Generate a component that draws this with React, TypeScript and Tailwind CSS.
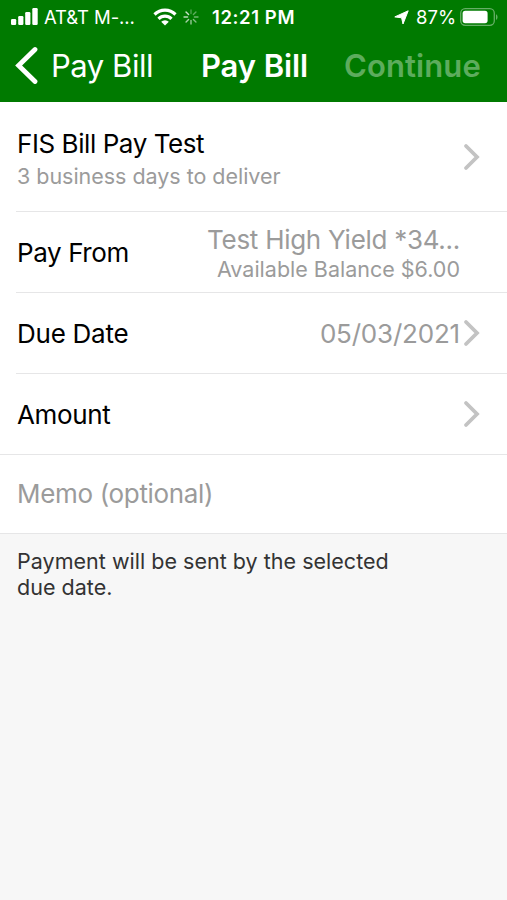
import type { ReactNode } from 'react'
import clsx from 'clsx'

const SPOKES = [0, 45, 90, 135, 180, 225, 270, 315]

function Chevron() {
    return (
        <svg className="h-[28px] w-[18px] shrink-0" viewBox="0 0 18 28" fill="none">
            <path d="M3 3 14 14 3 25" stroke="#c3c3c3" strokeWidth="3.8" strokeLinecap="round" />
        </svg>
    )
}

function StatusBar() {
    return (
        <div className="flex h-[34px] items-center text-[18.5px] leading-none">
            <svg className="ml-[11px] h-[18px] w-[27px] shrink-0" viewBox="0 0 27 18" fill="#fff">
                <rect x="0" y="11" width="5.2" height="6" rx="1.2" />
                <rect x="7.2" y="8" width="5.2" height="9" rx="1.2" />
                <rect x="14.2" y="4" width="5.2" height="13" rx="1.2" />
                <rect x="21.3" y="0" width="5.4" height="17" rx="1.2" />
            </svg>
            <span className="ml-[6px] w-[109px] tracking-[-0.1px] whitespace-nowrap">AT&amp;T M-...</span>
            <svg className="h-[18px] w-[24px] shrink-0" viewBox="0 0 24 18" fill="none" stroke="#fff" strokeWidth="3.2">
                <path d="M1.5 6.5a15 15 0 0 1 21 0" />
                <path d="M5.5 10.9a9.2 9.2 0 0 1 13 0" />
                <path d="M12 17.6 8.2 13.8a5.4 5.4 0 0 1 7.6 0Z" fill="#fff" stroke="none" />
            </svg>
            <svg className="ml-[6px] h-[16px] w-[16px] shrink-0" viewBox="0 0 16 16" stroke="#fff" strokeWidth="1.4" strokeLinecap="round">
                {SPOKES.map((deg, i) => (
                    <path key={deg} d="M8 1v3.6" opacity={0.3 + i * 0.07} transform={`rotate(${deg} 8 8)`} />
                ))}
            </svg>
            <span className="ml-[13px] w-[182px] font-semibold tracking-[0.6px] whitespace-nowrap">12:21 PM</span>
            <svg className="h-[15px] w-[15px] shrink-0" viewBox="0 0 15 15" fill="#fff" stroke="#fff" strokeWidth="1" strokeLinejoin="round">
                <path d="M14.2.8 9 14 7.6 7.8.8 6.9Z" />
            </svg>
            <span className="ml-[7px] w-[44px] tracking-[0.1px] whitespace-nowrap">87%</span>
            <svg className="h-[18px] w-[38px] shrink-0" viewBox="0 0 38 18">
                <rect x="0.7" y="0.7" width="33.6" height="16.6" rx="4.5" fill="none" stroke="#fff" strokeOpacity="0.4" strokeWidth="1.3" />
                <rect x="2.6" y="2.8" width="25" height="12.4" rx="2.6" fill="#fff" />
                <path d="M36 6.2c2 .8 2 4.8 0 5.6Z" fill="#fff" fillOpacity="0.4" />
            </svg>
        </div>
    )
}

function NavBar() {
    return (
        <div className="flex h-[62px] items-center text-[31px] leading-none whitespace-nowrap">
            <svg className="ml-[15px] h-[38px] w-[24px] shrink-0" viewBox="0 0 24 38" fill="none">
                <path d="M20 3.5 3.6 19.5 20 35.5" stroke="#fff" strokeWidth="4.8" strokeLinecap="round" />
            </svg>
            <span className="ml-[12px] w-[150px] tracking-[-0.45px]">Pay Bill</span>
            <span className="w-[143px] font-semibold tracking-[-0.1px]">Pay Bill</span>
            <span className="font-semibold tracking-[0.1px] text-[#5dac5d]">Continue</span>
        </div>
    )
}

function Row({ className, children }: { className?: string; children: ReactNode }) {
    return (
        <div className={clsx('ml-[16px] flex items-center border-b border-[#e6e6e7] pr-[26px] pl-px', className)}>
            {children}
        </div>
    )
}

export default function App() {
    return (
        <div className="flex h-[900px] w-[507px] flex-col overflow-hidden bg-[#f7f7f7] font-['Inter',sans-serif] text-[26px] leading-none whitespace-nowrap text-black">
            <header className="h-[102px] bg-[#007a00] text-white">
                <StatusBar />
                <NavBar />
            </header>
            <main className="bg-white">
                <Row className="h-[110px] justify-between">
                    <div className="pt-[6px]">
                        <div className="h-[32px] leading-[32px] tracking-[-0.43px]">FIS Bill Pay Test</div>
                        <div className="h-[32px] text-[21.5px] leading-[32px] tracking-[-0.03px] text-[#9b9b9b]">3 business days to deliver</div>
                    </div>
                    <Chevron />
                </Row>
                <Row className="h-[81px] justify-between">
                    <span className="pt-[2px] tracking-[-0.4px]">Pay From</span>
                    <div className="mr-[21px] pt-[5px] text-right text-[#9b9b9b]">
                        <div className="h-[30px] leading-[30px] tracking-[-0.28px]">Test High Yield *34...</div>
                        <div className="h-[30px] text-[21.5px] leading-[29px]">Available Balance $6.00</div>
                    </div>
                </Row>
                <Row className="h-[81px]">
                    <span className="pt-px tracking-[-0.25px]">Due Date</span>
                    <span className="mr-[3px] ml-auto pt-px tracking-[-0.2px] text-[#9b9b9b]">05/03/2021</span>
                    <Chevron />
                </Row>
                <div className="border-b border-[#e6e6e7]">
                    <div className="ml-[17px] flex h-[80px] items-center justify-between pr-[26px]">
                        <span className="pt-px tracking-[-0.35px]">Amount</span>
                        <Chevron />
                    </div>
                </div>
                <div className="flex h-[79px] items-center border-b border-[#e6e6e7] pl-[17px] tracking-[-0.33px] text-[#9b9b9b]">Memo (optional)</div>
            </main>
            <p className="w-[400px] pt-[14px] pl-[17px] text-[21.5px] leading-[26px] tracking-[0.02px] whitespace-normal text-[#333]">
                Payment will be sent by the selected due date.
            </p>
        </div>
    )
}
